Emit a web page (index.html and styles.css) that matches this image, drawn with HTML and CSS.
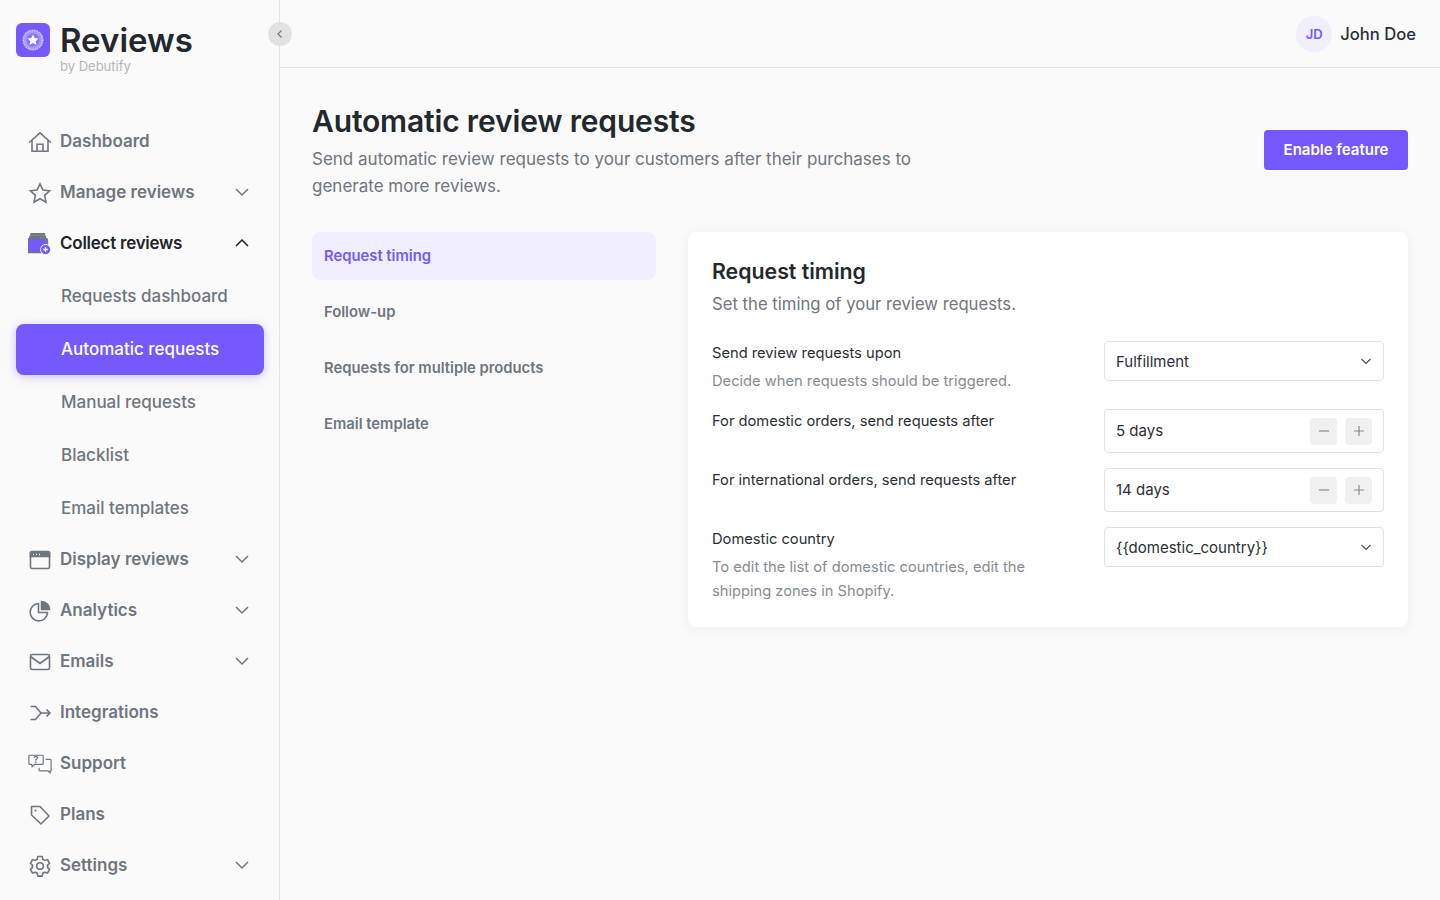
FILE: index.html
```html
<!DOCTYPE html>
<html lang="en">
<head>
<meta charset="utf-8">
<title>Automatic review requests</title>
<link rel="stylesheet" href="styles.css">
</head>
<body>
<div class="app">
  <aside class="sidebar">
    <div class="brand">
      <svg class="logo" viewBox="0 0 34 34"><rect width="34" height="34" rx="6" fill="#7559ff"/><circle cx="17" cy="17" r="10.5" fill="#a898ff"/><circle cx="17" cy="17" r="9.5" fill="none" stroke="#d6ceff" stroke-width="1.6" stroke-dasharray="1 1.4"/><circle cx="17" cy="17" r="6.6" fill="#8b73ff"/><path d="M17 11.4l1.7 3.6 3.9.5-2.9 2.7.8 3.9-3.5-2-3.5 2 .8-3.9-2.9-2.7 3.9-.5z" fill="#fff"/></svg>
      <div class="brand-text">
        <div class="brand-name">Reviews</div>
        <div class="brand-by">by Debutify</div>
      </div>
    </div>
    <button class="collapse" aria-label="Collapse"><svg viewBox="0 0 12 12" width="12" height="12"><path d="M7.5 2.5L4 6l3.5 3.5" fill="none" stroke="#71767d" stroke-width="1.2"/></svg></button>
    <nav class="nav">
      <a class="nav-item"><svg class="ic" viewBox="0 0 24 24"><path d="M1.2 12.5L12 2.8l10.800 9.700M4 10.500V21.200h16V10.500M9 21.200v-7h6v7"/></svg><span>Dashboard</span></a>
      <a class="nav-item"><svg class="ic" viewBox="0 0 24 24"><path d="M12 2.8l2.900 6.200 6.700.8-5 4.600 1.400 6.700-6-3.400-6 3.400 1.400-6.700-5-4.600 6.700-.8z"/></svg><span>Manage reviews</span><svg class="chev" viewBox="0 0 16 16"><path d="M2 5L8 11l6-6"/></svg></a>
      <a class="nav-item open"><svg class="ic" viewBox="0 0 26 24"><g fill="#7559ff"><rect x="3" y="1" width="15" height="1.300" rx=".6"/><rect x="2" y="3.500" width="17" height="1.500" rx=".7"/><path d="M0 8a2 2 0 0 1 2-2h17a2 2 0 0 1 2 2v4.500a6.500 6.500 0 0 0-6 8.700H2a2 2 0 0 1-2-2z"/><circle cx="19" cy="18" r="5.500" stroke="#fafafa" stroke-width="1"/></g><path d="M19 15.500v5M16.500 18h5" stroke="#fff" stroke-width="1.500" fill="none"/></svg><span class="strong">Collect reviews</span><svg class="chev" viewBox="0 0 16 16"><path d="M2 11L8 5l6 6"/></svg></a>
      <div class="subnav">
        <a class="sub-item">Requests dashboard</a>
        <a class="sub-item active">Automatic requests</a>
        <a class="sub-item">Manual requests</a>
        <a class="sub-item">Blacklist</a>
        <a class="sub-item">Email templates</a>
      </div>
      <a class="nav-item"><svg class="ic" viewBox="0 0 24 24"><rect x="2.500" y="3.500" width="19" height="17" rx="1.500"/><path d="M2.500 4.500h19V8.500h-19z" fill="#6f767e"/><path d="M5 6.500h1M8 6.500h1M11 6.500h1" stroke="#fafafa"/></svg><span>Display reviews</span><svg class="chev" viewBox="0 0 16 16"><path d="M2 5L8 11l6-6"/></svg></a>
      <a class="nav-item"><svg class="ic" viewBox="0 0 24 24"><path d="M10.500 4.500a8.700 8.700 0 1 0 9 9h-9z"/><path d="M13.500 2.500a8 8 0 0 1 8 8h-8z" fill="#6f767e"/></svg><span>Analytics</span><svg class="chev" viewBox="0 0 16 16"><path d="M2 5L8 11l6-6"/></svg></a>
      <a class="nav-item"><svg class="ic" viewBox="0 0 24 24"><rect x="2.500" y="4.500" width="19" height="15" rx="1.500"/><path d="M2.500 6.500l9.500 7 9.500-7"/></svg><span>Emails</span><svg class="chev" viewBox="0 0 16 16"><path d="M2 5L8 11l6-6"/></svg></a>
      <a class="nav-item"><svg class="ic" viewBox="0 0 24 24"><path d="M2.500 5.500H7.500L13 12l-5.500 6.500H2.500M13 12h9M18.500 8.500L22 12l-3.500 3.500"/></svg><span>Integrations</span></a>
      <a class="nav-item"><svg class="ic wide" viewBox="0 0 26 24"><path d="M2 2.500h13.500a1 1 0 0 1 1 1v8a1 1 0 0 1-1 1H7l-2.500 2.500-.5-2.500H2a1 1 0 0 1-1-1v-8a1 1 0 0 1 1-1z" stroke-width="1.300"/><path d="M19 7h5a1 1 0 0 1 1 1v11.500h-1v2l-2.500-2H13a1 1 0 0 1-1-1V16" stroke-width="1.300"/><text x="5.800" y="11" class="q">?</text></svg><span>Support</span></a>
      <a class="nav-item"><svg class="ic" viewBox="0 0 24 24"><path d="M3.500 3.500h8.500l9 9.500-8 8-9.500-9z" stroke-linejoin="round"/><circle cx="7.500" cy="7.500" r="1" fill="#6f767e" stroke="none"/></svg><span>Plans</span></a>
      <a class="nav-item"><svg class="ic" viewBox="0 0 24 24"><circle cx="12" cy="12" r="3.300"/><path d="M9.800 2.500h4.400l.6 2.800 1.900 1.100 2.700-.9 2.200 3.800-2.100 1.900v2.200l2.100 1.900-2.200 3.800-2.700-.9-1.900 1.100-.6 2.800H9.800l-.6-2.800-1.900-1.100-2.700.9-2.200-3.800 2.100-1.900v-2.200L2.400 9.300l2.200-3.800 2.700.9 1.900-1.100z" stroke-linejoin="round"/></svg><span>Settings</span><svg class="chev" viewBox="0 0 16 16"><path d="M2 5L8 11l6-6"/></svg></a>
    </nav>
  </aside>
  <div class="main">
    <header class="topbar">
      <div class="avatar">JD</div>
      <div class="user">John Doe</div>
    </header>
    <main class="content">
      <div class="page-head">
        <div>
          <h1 class="title">Automatic review requests</h1>
          <p class="lead">Send automatic review requests to your customers after their purchases to generate more reviews.</p>
        </div>
        <button class="primary">Enable feature</button>
      </div>
      <div class="columns">
        <div class="tabs">
          <a class="tab active">Request timing</a>
          <a class="tab">Follow-up</a>
          <a class="tab">Requests for multiple products</a>
          <a class="tab">Email template</a>
        </div>
        <section class="card">
          <h2 class="card-title">Request timing</h2>
          <p class="card-sub">Set the timing of your review requests.</p>
          <div class="rows">
            <div class="row row-pad">
              <div><div class="label">Send review requests upon</div><div class="hint">Decide when requests should be triggered.</div></div>
              <div class="control select"><span>Fulfillment</span><svg class="sel-chev" viewBox="0 0 12 12"><path d="M1.500 4L6 8.500 10.500 4"/></svg></div>
            </div>
            <div class="row">
              <div class="label">For domestic orders, send requests after</div>
              <div class="control stepper"><span>5 days</span><div class="steps"><button class="step"><svg viewBox="0 0 12 12"><path d="M1 6h10"/></svg></button><button class="step"><svg viewBox="0 0 12 12"><path d="M1 6h10M6 1v10"/></svg></button></div></div>
            </div>
            <div class="row">
              <div class="label">For international orders, send requests after</div>
              <div class="control stepper"><span>14 days</span><div class="steps"><button class="step"><svg viewBox="0 0 12 12"><path d="M1 6h10"/></svg></button><button class="step"><svg viewBox="0 0 12 12"><path d="M1 6h10M6 1v10"/></svg></button></div></div>
            </div>
            <div class="row">
              <div><div class="label">Domestic country</div><div class="hint">To edit the list of domestic countries, edit the shipping zones in Shopify.</div></div>
              <div class="control select"><span>{{domestic_country}}</span><svg class="sel-chev" viewBox="0 0 12 12"><path d="M1.500 4L6 8.500 10.500 4"/></svg></div>
            </div>
          </div>
        </section>
      </div>
    </main>
  </div>
</div>
</body>
</html>
```

FILE: styles.css
```css
* { box-sizing: border-box; }
html, body { margin: 0; height: 100%; }
body {
  background: #fafafa;
  color: #23282d;
  font-family: Inter, "Liberation Sans", sans-serif;
  overflow: hidden;
}
h1, h2, p { margin: 0; }
button { font-family: inherit; border: 0; padding: 0; cursor: pointer; }

.app { display: flex; height: 900px; }

.sidebar {
  position: relative;
  flex: 0 0 280px;
  border-right: 1px solid #e4e4e6;
  display: flex;
  flex-direction: column;
}
.brand { display: flex; gap: 10px; padding: 23px 0 0 16px; height: 116px; }
.logo { width: 34px; height: 34px; flex: none; }
.brand-name { font-size: 33px; font-weight: 600; line-height: 34px; color: #23282d; }
.brand-by { font-size: 13px; line-height: 18px; color: #b3b6ba; }
.collapse {
  position: absolute;
  left: 268px;
  top: 22px;
  width: 24px;
  height: 24px;
  border-radius: 50%;
  background: #e2e2e4;
  display: flex;
  align-items: center;
  justify-content: center;
}

.nav { display: flex; flex-direction: column; }
.nav-item {
  height: 51px;
  display: flex;
  align-items: center;
  padding-left: 28px;
  gap: 8px;
  font-size: 17px;
  font-weight: 600;
  color: #6f767e;
}
.nav-item.open { color: #1f2429; }
.nav-item > span { flex: 1; padding-bottom: 1px; }
.nav-item > .strong { letter-spacing: -0.25px; }
.ic { width: 24px; height: 24px; flex: none; fill: none; stroke: #6f767e; stroke-width: 1.6; }
.ic .q { font: 700 10px Inter, sans-serif; fill: #6f767e; stroke: none; }
.chev { width: 16px; height: 16px; flex: none; margin: 0 29px 2px 0; fill: none; stroke: #6f767e; stroke-width: 1.5; }
.nav-item.open .chev { stroke: #1f2429; }

.subnav { display: flex; flex-direction: column; padding: 2px 0 0 16px; margin-bottom: -2px; }
.sub-item {
  width: 248px;
  height: 51px;
  margin-bottom: 2px;
  display: flex;
  align-items: center;
  padding: 0 0 1px 45px;
  font-size: 17px;
  font-weight: 500;
  color: #6f767e;
  border-radius: 8px;
}
.sub-item.active {
  background: #7559ff;
  color: #fff;
  box-shadow: 0 2px 10px rgba(117, 89, 255, 0.35);
}

.main { flex: 1; display: flex; flex-direction: column; min-width: 0; }
.topbar {
  height: 68px;
  flex: none;
  border-bottom: 1px solid #e4e4e6;
  display: flex;
  align-items: center;
  justify-content: flex-end;
  padding-right: 24px;
  gap: 8px;
}
.avatar {
  width: 36px;
  height: 36px;
  border-radius: 50%;
  background: #f1eeff;
  color: #7559ff;
  font-size: 13px;
  font-weight: 600;
  display: flex;
  align-items: center;
  justify-content: center;
}
.user { font-size: 16.6px; font-weight: 500; color: #2b3036; }

.content { padding: 32px; }
.page-head { display: flex; align-items: center; justify-content: space-between; height: 100px; }
.title { font-size: 30px; font-weight: 600; line-height: 42px; letter-spacing: -0.16px; color: #23282d; }
.lead { font-size: 17px; line-height: 27px; margin-top: 4px; color: #6f767e; width: 610px; }
.primary {
  width: 144px;
  height: 40px;
  padding-bottom: 1px;
  border-radius: 4px;
  background: #7559ff;
  color: #fff;
  font-size: 15px;
  font-weight: 600;
}

.columns { display: flex; gap: 32px; margin-top: 32px; align-items: flex-start; }
.tabs { flex: 0 0 344px; display: flex; flex-direction: column; gap: 8px; }
.tab {
  height: 48px;
  display: flex;
  align-items: center;
  padding: 0 0 1px 12px;
  border-radius: 8px;
  font-size: 14.8px;
  font-weight: 600;
  color: #6f767e;
}
.tab.active { background: #f1eeff; color: #7559ff; }

.card {
  flex: 1;
  background: #fff;
  border-radius: 8px;
  padding: 24px;
  box-shadow: 0 2px 12px rgba(30, 30, 50, 0.05);
}
.card-title { font-size: 21.3px; font-weight: 600; line-height: 30px; color: #23282d; }
.card-sub { font-size: 16.7px; line-height: 24px; margin-top: 6px; color: #6f767e; }
.rows { display: flex; flex-direction: column; gap: 15px; margin-top: 25px; }
.row { display: grid; grid-template-columns: 1fr 280px; column-gap: 64px; align-items: start; }
.row-pad { padding-bottom: 1px; }
.label { font-size: 14.7px; line-height: 24px; color: #2b3036; }
.hint { font-size: 14.7px; line-height: 24px; margin-top: 4px; color: #878c92; }

.control {
  border: 1px solid #e2e2e4;
  border-radius: 4px;
  background: #fff;
  display: flex;
  align-items: center;
  justify-content: space-between;
  padding: 0 11px;
  font-size: 15px;
  color: #2b3036;
}
.select { height: 40px; }
.stepper { height: 44px; }
.stepper > span { padding-bottom: 2px; }
.sel-chev { width: 12px; height: 12px; fill: none; stroke: #4b5056; stroke-width: 1.2; }
.steps { display: flex; gap: 8px; }
.step {
  width: 27px;
  height: 27px;
  border-radius: 4px;
  background: #f0f0f1;
  display: flex;
  align-items: center;
  justify-content: center;
}
.step svg { width: 12px; height: 12px; fill: none; stroke: #878c92; stroke-width: 1.2; }
```
